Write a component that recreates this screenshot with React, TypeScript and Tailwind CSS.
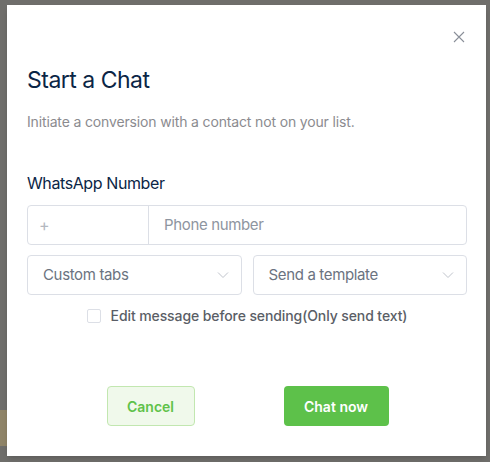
import React from "react";

export default function App() {
  return (
    <div
      className="relative w-[490px] h-[462px] bg-[#6f6e6b] overflow-hidden"
      style={{ fontFamily: "Inter, 'Noto Sans', sans-serif" }}
    >
      <div className="absolute left-0 top-[410px] w-[8px] h-[36px] bg-[#8f8468]" />
      <div className="absolute left-[7px] top-[5px] w-[479px] h-[451px] bg-white shadow-md flex flex-col pl-[20px] pr-[19px]">
        <div className="flex justify-end pt-[26px]">
          <svg width="12" height="12" viewBox="0 0 12 12" className="mr-[2px]">
            <path d="M1 1 L11 11 M11 1 L1 11" stroke="#8a8f99" strokeWidth="1.1" />
          </svg>
        </div>
        <h1 className="mt-[22px] text-[23px] leading-[30px] tracking-[-0.5px] text-[#0b2545] font-normal">
          Start a Chat
        </h1>
        <p className="mt-[17px] text-[14px] leading-[20px] tracking-[-0.15px] text-[#8b8b8f]">
          Initiate a conversion with a contact not on your list.
        </p>
        <div className="mt-[40px] text-[16px] leading-[22px] tracking-[-0.4px] text-[#0b2545]">
          WhatsApp Number
        </div>
        <div className="mt-[11px] flex h-[40px] border border-[#dcdfe6] rounded-[4px]">
          <div className="w-[121px] border-r border-[#dcdfe6] flex items-center pl-[11px] text-[#b4b8bf] text-[16px]">
            +
          </div>
          <div className="flex-1 flex items-center pl-[15px] text-[15px] tracking-[-0.35px] text-[#8e95a0]">
            Phone number
          </div>
        </div>
        <div className="mt-[10px] flex gap-[11px]">
          {["Custom tabs", "Send a template"].map((t) => (
            <div
              key={t}
              className="flex-1 h-[40px] border border-[#dcdfe6] rounded-[4px] flex items-center justify-between pl-[15px] pr-[12px]"
            >
              <span className="text-[15px] tracking-[-0.35px] text-[#6b7380]">{t}</span>
              <svg width="12" height="8" viewBox="0 0 12 8">
                <path d="M1 1.5 L6 6.5 L11 1.5" fill="none" stroke="#c0c4cc" strokeWidth="1" />
              </svg>
            </div>
          ))}
        </div>
        <div className="mt-[11px] h-[20px] flex items-center justify-center gap-[10px]">
          <div className="w-[14px] h-[14px] border border-[#dcdfe6] rounded-[2px] bg-white" />
          <span className="text-[14px] leading-[20px] tracking-[-0.1px] font-medium text-[#5a5e66]">
            Edit message before sending(Only send text)
          </span>
        </div>
        <div className="mt-[60px] flex justify-center gap-[89px] pl-[1px]">
          <button className="w-[88px] h-[40px] rounded-[4px] border border-[#c2e7b0] bg-[#f0f9eb] text-[#5fc24a] text-[14px] font-semibold">
            Cancel
          </button>
          <button className="w-[105px] h-[40px] rounded-[4px] bg-[#5dc14a] text-white text-[14px] font-semibold">
            Chat now
          </button>
        </div>
      </div>
    </div>
  );
}
